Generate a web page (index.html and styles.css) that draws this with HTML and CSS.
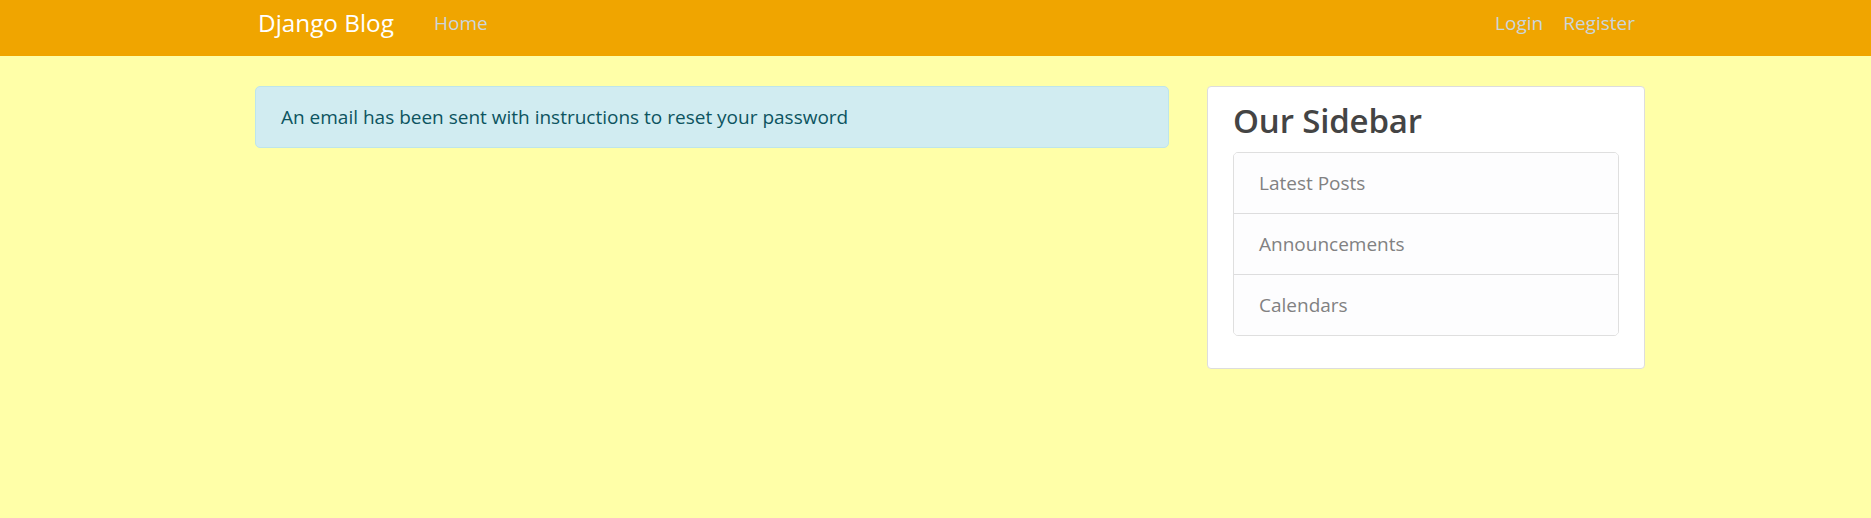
FILE: index.html
```html
<!DOCTYPE html>
<html lang="en">
<head>
<meta charset="utf-8">
<title>Django Blog</title>
<link rel="stylesheet" href="styles.css">
</head>
<body>
<header class="site-header">
  <nav class="navbar">
    <div class="container nav-inner">
      <a class="navbar-brand" href="#">Django Blog</a>
      <div class="nav-left">
        <a class="nav-link" href="#">Home</a>
      </div>
      <div class="nav-right">
        <a class="nav-link" href="#">Login</a>
        <a class="nav-link" href="#">Register</a>
      </div>
    </div>
  </nav>
</header>
<main class="container main">
  <div class="content">
    <div class="alert">An email has been sent with instructions to reset your password</div>
  </div>
  <aside class="content-section">
    <h3 class="sidebar-title">Our Sidebar</h3>
    <ul class="list-group">
      <li class="list-group-item">Latest Posts</li>
      <li class="list-group-item">Announcements</li>
      <li class="list-group-item">Calendars</li>
    </ul>
    <p class="empty"></p>
  </aside>
</main>
</body>
</html>
```
FILE: styles.css
```css
* { box-sizing: border-box; }
html, body { margin: 0; padding: 0; }
body {
  background: #ffffa8;
  font-family: "Open Sans", "Noto Sans", sans-serif;
  font-size: 19px;
  line-height: 30px;
  color: #333;
}
.container {
  width: 1390px;
  margin-left: 255px;
}
.navbar {
  background: #f0a500;
  height: 56px;
  padding-bottom: 11px;
}
.nav-inner {
  height: 45px;
  display: flex;
  align-items: center;
}
.navbar-brand {
  color: #fff;
  text-decoration: none;
  font-size: 24.3px;
  line-height: 37.5px;
  padding: 6.25px 0;
  margin-left: 3px;
  margin-right: 30px;
}
.nav-left, .nav-right { display: flex; }
.nav-right { margin-left: auto; }
.nav-link {
  color: #cbd5db;
  text-decoration: none;
  padding: 10px;
  line-height: 30px;
}
.main {
  display: grid;
  grid-template-columns: 914px 438px;
  column-gap: 38px;
  align-items: start;
  margin-top: 30px;
}
.alert {
  background: #d1ecf1;
  border: 1px solid #bee5eb;
  color: #0c5460;
  border-radius: 5px;
  padding: 15px 25px;
}
.content-section {
  background: #fff;
  border: 1px solid #ddd;
  border-radius: 4px;
  padding: 12.5px 25px;
}
.sidebar-title {
  margin: 0 0 10px;
  font-size: 33px;
  line-height: 42px;
  font-weight: 600;
  letter-spacing: -0.15px;
  color: #444;
}
.list-group {
  list-style: none;
  margin: 0;
  padding: 0;
  border: 1px solid rgba(0,0,0,.125);
  border-radius: 5px;
  overflow: hidden;
}
.list-group-item {
  background: #fdfdfe;
  color: #818182;
  padding: 15px 25px;
  line-height: 30px;
}
.list-group-item + .list-group-item {
  border-top: 1px solid rgba(0,0,0,.125);
}
.empty { margin: 0 0 20px; }
```
